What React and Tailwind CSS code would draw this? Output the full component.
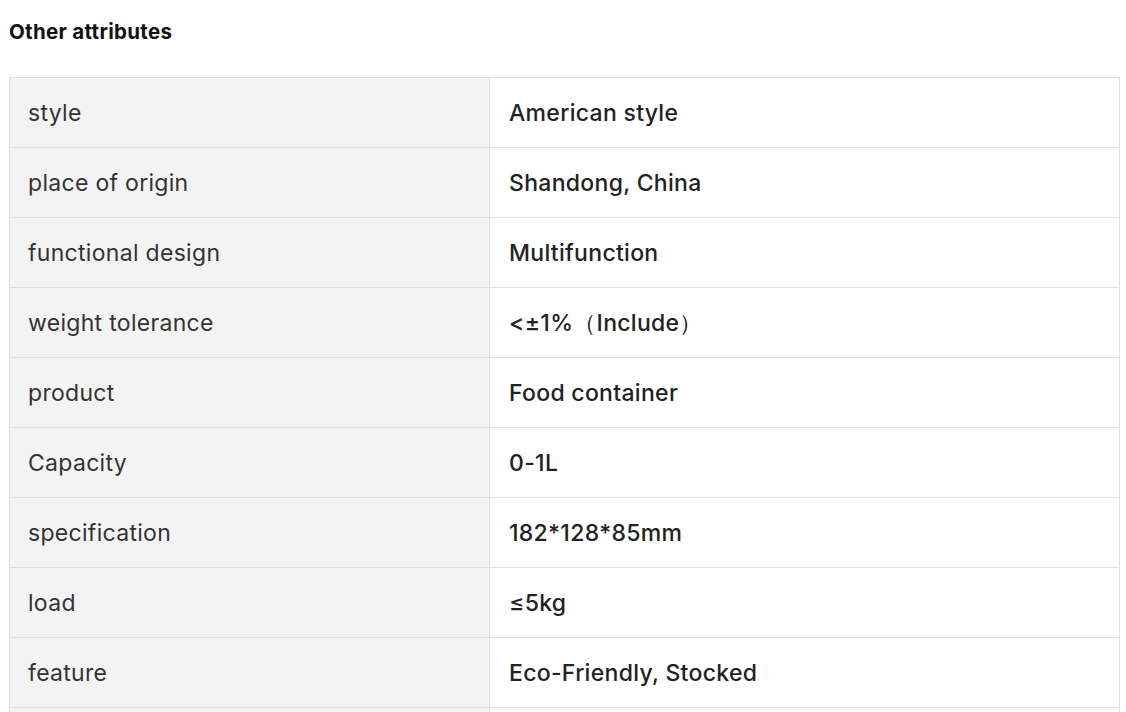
const attributes = [
  ['style', 'American style'],
  ['place of origin', 'Shandong, China'],
  ['functional design', 'Multifunction'],
  ['weight tolerance', '<±1%（Include）'],
  ['product', 'Food container'],
  ['Capacity', '0-1L'],
  ['specification', '182*128*85mm'],
  ['load', '≤5kg'],
  ['feature', 'Eco-Friendly, Stocked'],
  ['', ''],
];

export default function App() {
  return (
    <div className="h-[712px] overflow-hidden bg-white font-['Inter','Noto_Sans',sans-serif] text-[#222]">
      <div className="pl-[9px] pt-[20px]">
        <h2 className="text-[20.5px] font-bold leading-[24px] tracking-[0.3px] text-[#111]">Other attributes</h2>
        <table className="mt-[33px] w-[1111px] border-collapse border border-[#e0e0e0]">
          <tbody>
            {attributes.map(([name, value], i) => (
              <tr key={i} className="h-[70px] border-b border-[#e0e0e0]">
                <td className="w-[480px] border-r border-[#e0e0e0] bg-[#f3f3f3] pl-[18px] pt-[2px] text-[23px] tracking-[0.3px] text-[#333]">
                  {name}
                </td>
                <td className="pl-[19px] pt-[2px] text-[23px] font-medium tracking-[0.3px] text-[#222]">{value}</td>
              </tr>
            ))}
          </tbody>
        </table>
      </div>
    </div>
  );
}
